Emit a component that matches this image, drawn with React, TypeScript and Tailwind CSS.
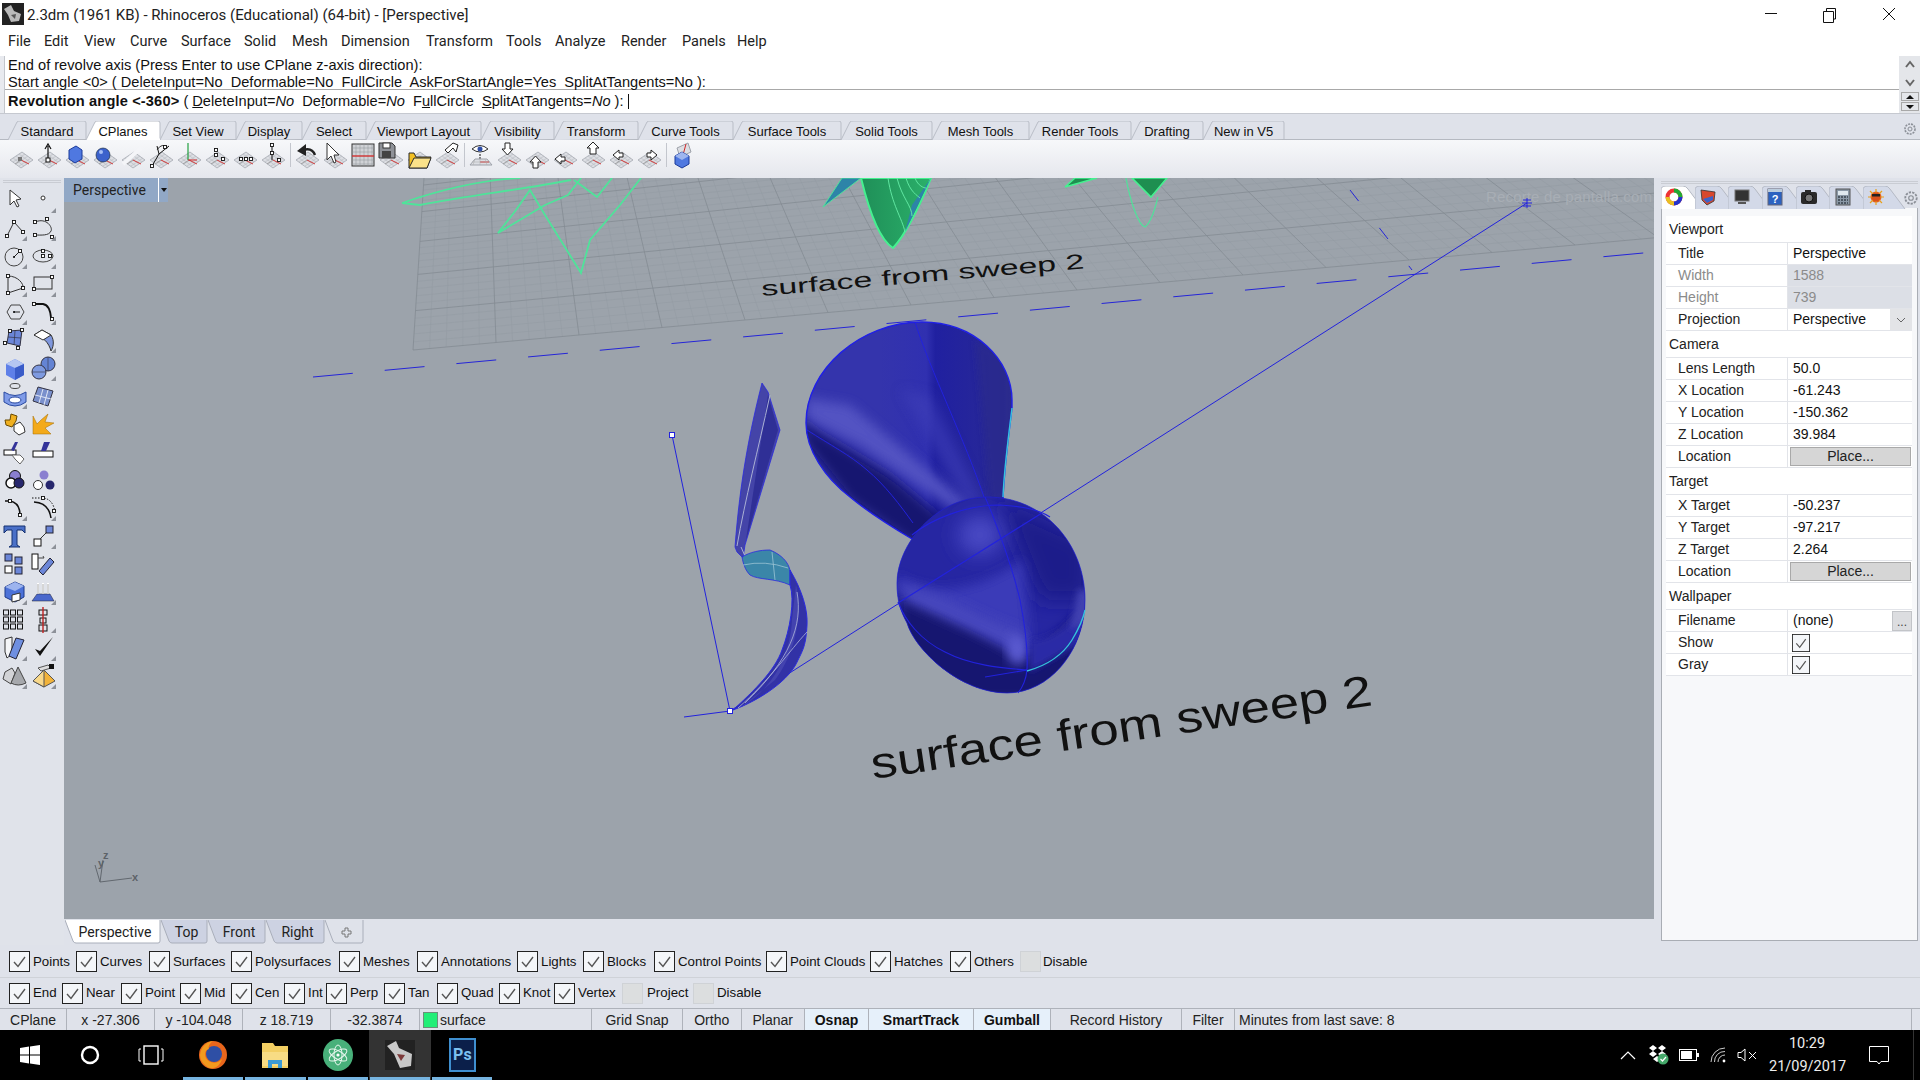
import type { ReactNode } from "react";

const menus = [
  ["File", 36], ["Edit", 40], ["View", 46], ["Curve", 51], ["Surface", 63], ["Solid", 48], ["Mesh", 49],
  ["Dimension", 85], ["Transform", 80], ["Tools", 49], ["Analyze", 66], ["Render", 61], ["Panels", 55], ["Help", 40],
] as const;

const topTabs = [
  ["Standard", 78], ["CPlanes", 74], ["Set View", 76], ["Display", 66], ["Select", 64], ["Viewport Layout", 115], ["Visibility", 73],
  ["Transform", 84], ["Curve Tools", 95], ["Surface Tools", 108], ["Solid Tools", 91], ["Mesh Tools", 97], ["Render Tools", 102],
  ["Drafting", 72], ["New in V5", 81],
] as const;

const filters = [
  ["Points", 67], ["Curves", 73], ["Surfaces", 82], ["Polysurfaces", 108], ["Meshes", 78], ["Annotations", 100], ["Lights", 66],
  ["Blocks", 71], ["Control Points", 112], ["Point Clouds", 104], ["Hatches", 80], ["Others", 70],
] as const;

const snaps = [
  ["End", 53], ["Near", 59], ["Point", 59], ["Mid", 51], ["Cen", 53], ["Int", 42], ["Perp", 58], ["Tan", 53], ["Quad", 62],
  ["Knot", 55], ["Vertex", 68],
] as const;

function Check({ size = 21 }: { size?: number }) {
  return (
    <svg width={size} height={size} viewBox="0 0 21 21" className="shrink-0">
      <rect x="0.5" y="0.5" width="20" height="20" fill="#f4f6f9" stroke="#222" />
      <path d="M5 11 L9 15.5 L16 6" fill="none" stroke="#555" strokeWidth="1.4" />
    </svg>
  );
}

function CheckItem({ label, width }: { label: string; width: number }) {
  return (
    <div className="flex items-center gap-[3px] shrink-0" style={{ width }}>
      <Check />
      <span className="text-[13.3px] text-[#111] whitespace-nowrap">{label}</span>
    </div>
  );
}

function OffItem({ label, width, gap }: { label: string; width: number; gap: string }) {
  return (
    <div className={`flex items-center shrink-0 ${gap}`} style={{ width }}>
      <div className="w-[21px] h-[21px] bg-[#dcdedf] border border-[#cfd2d6] shrink-0" />
      <span className="text-[13.3px] text-[#111] whitespace-nowrap">{label}</span>
    </div>
  );
}

function TopTab({ label, width, active }: { label: string; width: number; active?: boolean }) {
  return (
    <div className="relative flex items-center justify-center shrink-0 h-[18px] pt-[3px] text-[13px] text-[#111]" style={{ width }}>
      <svg width={width + 8} height="19" className="absolute left-0 top-0">
        <path
          d={`M0 19 L9 1 Q10 0 12 0 L${width - 2} 0 Q${width} 0 ${width} 2 L${width} 18`}
          fill={active ? "#ffffff" : "#dfe2ea"}
          stroke="#b9bdc6"
        />
        {active && <rect x="2" y="17.5" width={width - 2} height="2" fill="#fff" />}
      </svg>
      <span className="relative">{label}</span>
    </div>
  );
}

function ViewTab({ label, width, active, children }: { label?: string; width: number; active?: boolean; children?: ReactNode }) {
  return (
    <div className="relative flex items-center justify-center shrink-0 h-[24px] text-[14px] text-[#222] font-['Roboto',sans-serif]" style={{ width }}>
      <svg width={width} height="24" className="absolute left-0 top-0">
        <path
          d={`M0 0 L8 21 Q9 23 11 23 L${width - 3} 23 Q${width - 1} 23 ${width - 1} 21 L${width - 1} 0`}
          fill={active ? "#ffffff" : children ? "#dfe2ea" : "#cdd2e2"}
          stroke="#a9aeba"
        />
      </svg>
      <span className="relative pl-[4px]">{label}{children}</span>
    </div>
  );
}

function SideTab({ children, active }: { children: ReactNode; active?: boolean }) {
  return (
    <div className="relative w-[33.7px] h-[22px] pr-[7px] shrink-0 flex items-center justify-center">
      <svg width="44" height="23" className="absolute left-0 top-0">
        <path d="M0 23 L0 4 Q0 0 5 0 L22 0 Q25 0 27 3 L42 23" fill={active ? "#ffffff" : "#d3d9e8"} stroke="#b4b9c4" />
      </svg>
      <span className="relative flex">{children}</span>
    </div>
  );
}

function Section({ title }: { title: string }) {
  return <div className="h-[27px] flex items-center pl-[3px] border-b border-[#e2e4e9] text-[14px] text-[#222]">{title}</div>;
}

function Row({ label, value, muted, children }: { label: string; value?: string; muted?: boolean; children?: ReactNode }) {
  return (
    <div className="h-[22px] flex border-b border-[#e2e4e9] text-[14px]">
      <div className={`w-[122px] pl-[12px] flex items-center border-r border-[#e2e4e9] ${muted ? "text-[#8b8b8b]" : "text-[#222]"}`}>{label}</div>
      <div className={`flex-1 flex items-center ${muted ? "bg-[#dcdfe6] text-[#8b8b8b]" : "text-[#111]"}`}>
        {value && <span className="pl-[5px]">{value}</span>}
        {children}
      </div>
    </div>
  );
}

function PlaceButton() {
  return <div className="ml-[2px] w-[121px] h-[19px] bg-[#d6d6d6] border border-[#a9a9a9] flex items-center justify-center text-[#222]">Place...</div>;
}

/* ---- left tool palette ---- */
const sq = (x: number, y: number) => <rect x={x - 1.5} y={y - 1.5} width="3" height="3" fill="#fff" stroke="#111" strokeWidth="0.9" />;
const blue = "#6b86d8";

function Tool({ children, fly = true }: { children: ReactNode; fly?: boolean }) {
  return (
    <svg width="28" height="28" viewBox="0 0 28 28">
      {children}
      {fly && <path d="M27 22 L27 27 L22 27 Z" fill="#8d9199" />}
    </svg>
  );
}

const sideTools: [ReactNode, boolean][] = [
  [<path d="M10 4 L10 19 L14 15 L17 21 L19 20 L16 14 L21 13 Z" fill="#fff" stroke="#333" />, false],
  [<circle cx="14" cy="12" r="2" fill="#fff" stroke="#333" />, true],
  [<g><path d="M7 22 L14 8 L23 18" fill="none" stroke="#333" />{sq(7, 22)}{sq(14, 8)}{sq(23, 18)}</g>, true],
  [<g><path d="M6 8 C18 3 24 14 22 17 C20 22 12 21 6 21" fill="none" stroke="#333" />{sq(6, 8)}{sq(18, 5)}{sq(6, 21)}{sq(23, 23)}</g>, true],
  [<g><circle cx="14" cy="15" r="9" fill="none" stroke="#444" /><path d="M14 15 L20 9" stroke="#222" />{sq(20, 9)}<circle cx="14" cy="15" r="1" /></g>, true],
  [<g><ellipse cx="14" cy="14" rx="10" ry="6" fill="none" stroke="#444" />{sq(14, 9)}{sq(14, 14)}{sq(21, 14)}</g>, true],
  [<g><path d="M8 6 C18 6 24 14 23 18 L8 23 Z" fill="none" stroke="#333" />{sq(8, 6)}{sq(23, 18)}{sq(8, 23)}</g>, true],
  [<g><rect x="5" y="7" width="18" height="12" fill="none" stroke="#333" />{sq(23, 7)}{sq(5, 19)}</g>, true],
  [<g><path d="M7 14 L11 7 L20 7 L24 14 L20 21 L11 21 Z" fill="none" stroke="#444" /><path d="M14 14 L20 14" stroke="#222" /><circle cx="14" cy="14" r="1" /></g>, true],
  [<g><path d="M5 6 L14 6 Q21 7 22 20" fill="none" stroke="#111" strokeWidth="1.8" />{sq(5, 6)}{sq(23, 21)}</g>, true],
  [<g><path d="M9 5 L22 4 L20 20 L7 17 Z" fill={blue} stroke="#334" />{sq(10, 5)}{sq(22, 4)}{sq(5, 17)}{sq(18, 22)}<path d="M15 5 L14 19 M8 11 L21 12" stroke="#334" strokeWidth=".7" /></g>, false],
  [<g><path d="M5 9 L13 4 L22 9 C26 15 24 22 22 25 C20 17 14 10 5 9 Z" fill="#7f97dd" stroke="#333" /><path d="M5 9 L13 4 L22 9 L14 14 Z" fill="#fff" stroke="#333" /></g>, true],
  [<g><path d="M6 10 L15 5 L24 10 L24 21 L15 26 L6 21 Z" fill="#5f80e8" /><path d="M6 10 L15 14 L24 10 L15 5 Z" fill="#b5c6f2" /><path d="M15 14 L15 26 L24 21 L24 10 Z" fill="#3a5cc8" /></g>, false],
  [<g><circle cx="19" cy="10" r="7" fill="#6484d4" stroke="#334" /><circle cx="10" cy="18" r="7" fill="#7e9ae0" stroke="#334" /><path d="M3 18 H17 M19 3 V17" stroke="#334" strokeWidth=".6" /></g>, true],
  [<g><ellipse cx="15" cy="4" rx="5" ry="2.5" fill="none" stroke="#444" /><path d="M4 10 Q15 17 26 10 L26 20 Q15 28 4 20 Z" fill="#7f9be8" stroke="#2a4aa0" /><ellipse cx="15" cy="18" rx="6" ry="3" fill="#fff" stroke="#2a4aa0" /></g>, true],
  [<g><path d="M9 5 L24 9 L19 24 L4 19 Z" fill="#7a90cc" stroke="#334" /><path d="M14 7 L10 21 M19 8 L15 23 M6 13 L22 17" stroke="#dfe5f5" /></g>, false],
  [<g><path d="M5 10 L10 10 L11 4 L17 6 L16 11 L12 17 L6 15 Z" fill="#f0b020" stroke="#6a4a00" /><path d="M14 15 L20 12 L24 17 L25 22 L19 25 L14 21 Z" fill="#fff" stroke="#333" /></g>, false],
  [<path d="M4 6 L8 14 L12 10 L19 4 L16 12 L25 13 L16 18 L22 24 L4 24 Z" fill="#f3aa1a" stroke="#a06a00" strokeWidth=".5" />, false],
  [<g><rect x="4" y="12" width="12" height="5" fill="#fff" stroke="#111" /><path d="M15 4 L18 4 L14 13 L11 12 Z" fill="#333399" /><path d="M12 17 L20 17 L24 21 L20 26 L15 21 Z" fill="#fff" stroke="#666" /></g>, false],
  [<g><rect x="4" y="13" width="20" height="6" fill="#fff" stroke="#111" /><path d="M15 4 L21 4 L17 13 L12 13 Z" fill="#333399" /></g>, false],
  [<g><circle cx="15" cy="10" r="5.5" fill="#8a7fd0" stroke="#111" /><circle cx="11" cy="17" r="5" fill="#fff" stroke="#111" strokeWidth="1.5" /><circle cx="19" cy="17" r="5" fill="#27276d" stroke="#111" /></g>, false],
  [<g><circle cx="15" cy="9" r="4.5" fill="#8a7fd0" /><circle cx="9" cy="19" r="4.5" fill="#fff" stroke="#333" /><circle cx="21" cy="19" r="4.5" fill="#27276d" /></g>, false],
  [<g><path d="M5 7 L10 7 Q20 9 20 21" fill="none" stroke="#111" strokeWidth="1.6" />{sq(10, 7)}{sq(20, 21)}</g>, true],
  [<g><path d="M5 8 Q20 9 22 24" fill="none" stroke="#111" strokeWidth="1.6" /><path d="M3 4 H14 Q24 5 26 18" fill="none" stroke="#111" strokeDasharray="1.5 1.5" />{sq(14, 4)}{sq(25, 17)}</g>, true],
  [<path d="M4 4 H25 V11 L22 8 H17 V23 L20 25 H9 L12 23 V8 H7 L4 11 Z" fill="#4a70c8" stroke="#143070" />, false],
  [<g><rect x="5" y="17" width="7" height="7" fill="#fff" stroke="#111" /><rect x="17" y="4" width="7" height="7" fill={blue} stroke="#223" /><path d="M11 17 L18 10" stroke="#333" /></g>, true],
  [<g><rect x="5" y="4" width="7" height="7" fill={blue} stroke="#223" /><rect x="15" y="7" width="7" height="7" fill={blue} stroke="#223" /><rect x="5" y="16" width="7" height="7" fill="#fff" stroke="#111" /><rect x="15" y="17" width="7" height="7" fill={blue} stroke="#223" /></g>, false],
  [<g><rect x="3" y="4" width="6" height="15" fill="#fff" stroke="#111" /><path d="M9 8 H15 L14 6" fill="none" stroke="#444" /><path d="M21 8 L25 12 L14 25 L10 21 Z" fill={blue} stroke="#223" /></g>, false],
  [<g><path d="M5 9 L15 4 L24 8 L24 19 L15 24 L5 19 Z" fill="#4c72d8" stroke="#1d3a8a" /><path d="M5 9 L15 13 L24 8 L15 4 Z" fill="#9db4ee" /><path d="M12 17 L20 15 L20 22 L12 24 Z" fill="#fff" stroke="#333" /></g>, true],
  [<g><path d="M9 5 V16 M14 5 V16 M19 5 V16" stroke="#fff" strokeWidth="2" /><path d="M9 6 V15 M14 6 V15 M19 6 V15" stroke="#555" strokeWidth=".5" /><path d="M8 16 L21 16 L25 23 L3 23 Z" fill="#4a68cc" stroke="#223" strokeWidth=".5" /></g>, true],
  [<g fill="none" stroke="#111">{[6, 13, 20].flatMap((y) => [6, 13, 20].map((x) => <rect key={`${x}${y}`} x={x - 2.5} y={y - 2} width="5" height="5" />))}</g>, false],
  [<g><rect x="10" y="4" width="8" height="5" fill="none" stroke="#111" /><rect x="11" y="12" width="6" height="5" fill="none" stroke="#111" /><rect x="10" y="19" width="8" height="6" fill="none" stroke="#111" /><path d="M14 1 V27" stroke="#c02020" strokeWidth="1.4" /></g>, true],
  [<g><path d="M5 5 L12 3 L12 20 L7 24 L5 18 Z" fill="#f4f5f7" stroke="#333" /><path d="M16 4 L24 6 L16 25 L9 22 Z" fill="#6f8fe0" stroke="#223" /></g>, true],
  [<path d="M6 15 L11 22 L24 3 L11 17 Z" fill="#111" />, true],
  [<g><path d="M5 10 L12 6 L15 11 L11 22 L3 17 Z" fill="#d2d3d6" stroke="#444" /><path d="M18 5 L26 21 Q18 25 11 21 Z" fill="#a6a8ac" stroke="#444" /></g>, true],
  [<g><path d="M15 8 L26 19 L15 25 L4 19 Z" fill="#f2b33a" stroke="#555" /><path d="M15 8 L15 25 L4 19 Z" fill="#f8d88a" stroke="#555" /><path d="M9 6 L19 3 L22 6 L12 9 Z" fill="#ddd" stroke="#555" /><rect x="20" y="2" width="5" height="5" fill="#111" /></g>, true],
];

/* ---- top toolbar ---- */
function CPlaneIcon({ children, plain }: { children?: ReactNode; plain?: boolean }) {
  return (
    <svg width="28" height="30" viewBox="0 0 28 30" className="shrink-0">
      {!plain && (
        <g>
          <path d="M3 20 L15 12 L26 20 L14 28 Z" fill="#dcdee3" stroke="#9ea2aa" strokeWidth=".7" />
          <path d="M6 18 L17 26 M9 16 L20 24 M12 14 L23 22 M6 22 L18 14 M9 24 L21 16 M12 26 L24 18" stroke="#aeb2b9" strokeWidth=".5" />
          <path d="M14 20 L22 24" stroke="#d02828" strokeWidth=".9" />
          <path d="M14 20 L8 24" stroke="#888" strokeWidth=".7" />
        </g>
      )}
      {children}
    </svg>
  );
}

const tb: ReactNode[][] = [
  [
    <CPlaneIcon key="1"><rect x="11" y="17" width="4" height="4" fill="#777" /></CPlaneIcon>,
    <CPlaneIcon key="2"><path d="M13 20 V6 M10 9 L13 4 L16 9" fill="none" stroke="#111" strokeWidth="1.2" /><rect x="11" y="18" width="4" height="4" fill="#fff" stroke="#111" /></CPlaneIcon>,
    <CPlaneIcon key="3"><path d="M6 10 L13 6 L19 10 L19 19 L12 23 L6 19 Z" fill="#4f78e0" stroke="#1b3a9a" /></CPlaneIcon>,
    <CPlaneIcon key="4"><circle cx="12" cy="15" r="7" fill="#3c62cc" stroke="#123" strokeWidth=".6" /><circle cx="10" cy="12" r="2" fill="#a5bdf5" /></CPlaneIcon>,
    <CPlaneIcon key="5"><path d="M4 24 L22 8" stroke="#f4f5f8" strokeWidth="4" /></CPlaneIcon>,
    <CPlaneIcon key="6"><path d="M5 26 L12 14 L10 6 M12 14 L22 6" fill="none" stroke="#111" /><path d="M10 10 Q15 2 21 8" fill="none" stroke="#333" />{sq(18, 7)}{sq(5, 26)}</CPlaneIcon>,
    <CPlaneIcon key="7"><path d="M13 3 V20" stroke="#22a040" strokeWidth="1.2" /><path d="M13 20 H22" stroke="#d02828" /></CPlaneIcon>,
    <CPlaneIcon key="8">{sq(13, 10)}{sq(13, 15)}{sq(20, 19)}</CPlaneIcon>,
    <CPlaneIcon key="9">{sq(10, 19)}{sq(15, 19)}{sq(20, 19)}</CPlaneIcon>,
    <CPlaneIcon key="10"><path d="M13 6 V20" stroke="#111" />{sq(13, 5)}{sq(13, 13)}{sq(20, 20)}</CPlaneIcon>,
  ],
  [
    <CPlaneIcon key="11"><path d="M22 15 Q19 7 10 10" fill="none" stroke="#222" strokeWidth="2.4" /><path d="M4 11 L13 4 L13 16 Z" fill="#222" /></CPlaneIcon>,
    <CPlaneIcon key="12"><path d="M6 3 L6 20 L10 16 L13 23 L15 22 L13 15 L18 15 Z" fill="#fff" stroke="#333" /></CPlaneIcon>,
    <svg key="13" width="28" height="30" viewBox="0 0 28 30" className="shrink-0">
      <rect x="3" y="4" width="22" height="22" fill="#d0d2d6" stroke="#333" />
      <path d="M7 4 V26 M11 4 V26 M15 4 V26 M19 4 V26 M23 4 V26 M3 8 H25 M3 12 H25 M3 20 H25 M3 24 H25" stroke="#8d9095" strokeWidth=".5" />
      <path d="M3 16 H25" stroke="#d03030" strokeWidth="1.4" />
    </svg>,
    <CPlaneIcon key="14"><path d="M2 3 H15 L18 6 V18 H2 Z" fill="#8f9298" stroke="#333" /><rect x="6" y="3" width="7" height="5" fill="#fff" stroke="#333" /><rect x="5" y="11" width="9" height="7" fill="#444" /></CPlaneIcon>,
    <CPlaneIcon key="15"><path d="M4 13 L4 28 L22 28 L26 17 L11 17 L9 13 Z" fill="#f3c023" stroke="#2b2b2b" /><path d="M4 28 L9 18 L26 18 L22 28 Z" fill="#fbe28a" stroke="#2b2b2b" /></CPlaneIcon>,
    <CPlaneIcon key="16"><path d="M12 10 L20 3 L25 5 L23 12 L20 8 L15 13 Z" fill="#fff" stroke="#222" /></CPlaneIcon>,
  ],
  [
    <svg key="17" width="28" height="30" viewBox="0 0 28 30" className="shrink-0">
      <path d="M5 9 Q13 2 21 9 Q13 15 5 9 Z" fill="#fff" stroke="#333" /><circle cx="13" cy="9" r="2.5" fill="#2f4fa8" />
      <path d="M13 14 V22" stroke="#111" strokeDasharray="2 1" />
      <path d="M3 25 L8 19 L20 19 L25 25 Z" fill="#dcdee3" stroke="#9ea2aa" /><path d="M13 22 H22" stroke="#d02828" /><path d="M8 19 L6 25 M13 19 V25 M18 19 L20 25 M5 22 H23" stroke="#aaa" strokeWidth=".5" />
    </svg>,
    <CPlaneIcon key="18"><path d="M10 3 H15 V9 H18 L12.5 15 L7 9 H10 Z" fill="#fff" stroke="#222" /></CPlaneIcon>,
    <CPlaneIcon key="19"><path d="M10 28 H15 V22 H18 L12.5 16 L7 22 H10 Z" fill="#fff" stroke="#222" /></CPlaneIcon>,
    <CPlaneIcon key="20"><path d="M4 19 L10 14 V17 H14 V21 H10 V24 Z" fill="#fff" stroke="#222" /></CPlaneIcon>,
    <CPlaneIcon key="21"><path d="M14 2 L20 8 H17 V14 H11 V8 H8 Z" fill="#fff" stroke="#222" /></CPlaneIcon>,
    <CPlaneIcon key="22"><path d="M6 15 L12 10 V13 H16 V17 H12 V20 Z" fill="#fff" stroke="#222" /></CPlaneIcon>,
    <CPlaneIcon key="23"><path d="M22 15 L16 10 V13 H12 V17 H16 V20 Z" fill="#fff" stroke="#222" /></CPlaneIcon>,
  ],
  [
    <svg key="24" width="28" height="30" viewBox="0 0 28 30" className="shrink-0">
      <path d="M8 8 L19 3 L22 12 L11 17 Z" fill="#dcdee3" stroke="#9ea2aa" /><path d="M17 4 L14 15" stroke="#d02828" />
      <path d="M6 16 L13 12 L20 16 L20 24 L13 28 L6 24 Z" fill="#4f78e0" stroke="#1b3a9a" /><path d="M6 16 L13 20 L20 16 L13 12 Z" fill="#9eb6ef" />
    </svg>,
  ],
];

/* ---- viewport scene ---- */
function gridPoint(u: number, v: number): [number, number] {
  const dy = 41 * v - 1.6 * v * v;
  return [413 + 83 * u + ((11 - 17 * u) * dy) / 172, 350 - 7.5 * u - dy];
}

function Grid() {
  const minor: ReactNode[] = [];
  const major: ReactNode[] = [];
  for (let i = 0; i <= 80; i++) {
    const [x1, y1] = gridPoint(i / 5, 0);
    const [x2, y2] = gridPoint(i / 5, 7);
    const line = <line key={`u${i}`} x1={x1} y1={y1} x2={x2} y2={y2} />;
    (i % 5 === 0 ? major : minor).push(line);
  }
  for (let i = 0; i <= 35; i++) {
    const [x1, y1] = gridPoint(0, i / 5);
    const [x2, y2] = gridPoint(16, i / 5);
    const line = <line key={`v${i}`} x1={x1} y1={y1} x2={x2} y2={y2} />;
    (i % 5 === 0 ? major : minor).push(line);
  }
  return (
    <g>
      <g stroke="#939aa2" strokeWidth="0.5">{minor}</g>
      <g stroke="#848b93" strokeWidth="0.8">{major}</g>
    </g>
  );
}

function Scene() {
  const conePath = "M806 423 C806 370 860 322 922 322 C975 322 1012 360 1012 400 L1012 408 C1008 440 1004 470 1003 500 L985 540 L912 539 C880 520 862 507 850 497 C825 478 806 450 806 423 Z";
  const bulbPath = "M897 583 C897 545 935 497 987 497 C1045 497 1085 545 1085 600 C1085 650 1050 693 1007 693 C960 693 915 650 907 623 C900 610 897 600 897 583 Z";
  return (
    <svg viewBox="64 178 1590 741" width="1590" height="741" className="block">
      <defs>
        <filter id="b3" x="-30%" y="-30%" width="160%" height="160%"><feGaussianBlur stdDeviation="3" /></filter>
        <filter id="b6" x="-30%" y="-30%" width="160%" height="160%"><feGaussianBlur stdDeviation="6" /></filter>
        <filter id="b10" x="-40%" y="-40%" width="180%" height="180%"><feGaussianBlur stdDeviation="10" /></filter>
        <clipPath id="cone"><path d={conePath} /></clipPath>
        <clipPath id="bulb"><path d={bulbPath} /></clipPath>
        <linearGradient id="cb" x1="880" y1="400" x2="1012" y2="400" gradientUnits="userSpaceOnUse">
          <stop offset="0" stopColor="#3434ac" />
          <stop offset="0.35" stopColor="#3030b0" />
          <stop offset="0.42" stopColor="#2020a0" />
          <stop offset="0.75" stopColor="#26269a" />
          <stop offset="1" stopColor="#2c2c8e" />
        </linearGradient>
        <linearGradient id="leaf" x1="0" y1="0" x2="1" y2="0">
          <stop offset="0" stopColor="#1f8f58" />
          <stop offset="1" stopColor="#2bb06a" />
        </linearGradient>
      </defs>
      <Grid />

      {/* green reference curves */}
      <g fill="none" stroke="#4fe39a" strokeWidth="1.8">
        <path d="M402 203 C440 190 480 180 520 178 M402 203 L420 205 C470 195 520 190 571 180" />
        <path d="M498 233 L545 205 L568 195 L581 178" />
        <path d="M498 233 L516 210 L530 190 L545 215 L581 273 L590 240 L620 205 L641 178" />
        <path d="M574 180 L597 197 L612 178" />
        <path d="M1126 178 C1130 200 1138 225 1145 227 C1152 222 1156 205 1158 197" strokeWidth="1.2" />
      </g>
      <path d="M842 178 L823 207 L861 178 Z" fill="#2d84a8" stroke="#4fe39a" />
      <path d="M861 178 C870 215 880 240 893 248 C905 235 920 205 931 178 Z" fill="url(#leaf)" stroke="#46f090" strokeWidth="2" />
      <path d="M905 232 L931 178 L912 205 Z" fill="#2d84a8" />
      <g fill="none" stroke="#67eda8" strokeWidth=".9">
        <path d="M888 178 C892 205 902 218 905 232 M897 178 C902 198 912 206 912 216 M906 178 C910 192 918 196 920 198 M915 178 C918 186 924 188 926 188" />
      </g>
      <path d="M1065 187 L1097 178 L1075 178 Z" fill="#1e8f50" stroke="#46f090" strokeWidth="1.6" />
      <path d="M1132 178 L1151 197 L1167 178 Z" fill="#1e8f50" stroke="#46f090" strokeWidth="1.6" />

      <text x="0" y="0" transform="translate(762 296) rotate(-4.9)" fontFamily="Liberation Sans, sans-serif" fontSize="21" fill="#111" textLength="324" lengthAdjust="spacingAndGlyphs">surface from sweep 2</text>
      <text x="1486" y="202" fontFamily="Liberation Sans, sans-serif" fontSize="15" fill="#a8aeb5" textLength="166">Recorte de pantalla.com</text>

      {/* construction lines */}
      <line x1="313" y1="377" x2="1654" y2="252" stroke="#2525d8" strokeWidth="1" strokeDasharray="40 32" />
      <line x1="1350" y1="190" x2="1412" y2="270" stroke="#2525d8" strokeWidth="1" strokeDasharray="14 34" />
      <path d="M730 711 L1527 203" stroke="#2222dd" strokeWidth="1" fill="none" />
      <path d="M1522 203 H1532 M1527 198 V208 M1523 200 H1531 M1523 206 H1531" stroke="#2222dd" strokeWidth="1" fill="none" />
      <path d="M684 717 L730 711 L672 435" stroke="#2222dd" strokeWidth="1" fill="none" />

      {/* sweep section */}
      <path d="M762 383 L768 392 L780 430 L745 545 L743 558 L737 552 L735 547 C740 480 750 430 762 383 Z" fill="#4444a8" stroke="#2a2ae0" strokeWidth=".8" />
      <path d="M768 395 L778 430 L746 540 Z" fill="#2f2f96" />
      <path d="M770 395 C758 450 745 500 737 546 M741 547 L745 556" fill="none" stroke="#aab0d4" strokeWidth="1" />
      <path d="M742 557 C750 552 760 550 770 550 C782 555 788 562 790 570 L790 585 C775 578 758 580 750 575 C745 570 743 563 742 557 Z" fill="#3b86a8" stroke="#2a2ae0" strokeWidth=".8" />
      <path d="M743 565 Q765 560 788 568 M772 552 L775 580" fill="none" stroke="#9cc4d4" strokeWidth=".8" />
      <path d="M790 570 C802 590 808 610 807 625 C806 645 803 650 798 660 C790 680 760 700 733 710 C755 690 775 670 782 650 C790 630 795 600 790 585 Z" fill="#3232a6" stroke="#2a2ae0" strokeWidth="1" />
      <path d="M796 585 C802 610 798 650 775 680 L740 708 C770 690 790 660 792 620 Z" fill="#4a4ab4" opacity=".7" />
      <path d="M797 592 C803 625 790 660 745 703 M807 632 C790 650 770 680 738 708" fill="none" stroke="#b0b6da" strokeWidth=".8" />
      <rect x="669.5" y="432.5" width="5" height="5" fill="#fff" stroke="#2222dd" />
      <rect x="727.5" y="708.5" width="5" height="5" fill="#fff" stroke="#2222dd" />

      {/* revolved body */}
      <path d={conePath} fill="url(#cb)" />
      <g clipPath="url(#cone)">
        <path d="M800 415 L806 445 L850 500 L915 545 L950 525 L890 475 L815 430 Z" fill="#14146f" filter="url(#b6)" />
        <path d="M806 398 L850 405 L970 505 L955 510 L860 445 L806 418 Z" fill="#5252c2" filter="url(#b6)" />
        <path d="M900 390 L930 395 L985 505 L968 505 Z" fill="#4040b8" opacity=".6" filter="url(#b6)" />
        <path d="M1012 360 L1012 500 L990 500 L975 340 Z" fill="#2b2b8c" opacity=".7" filter="url(#b3)" />
      </g>
      <path d={conePath} fill="none" stroke="#2020e8" strokeWidth="1.4" />
      <path d="M915 322 C930 370 965 440 985 500" fill="none" stroke="#2222dd" strokeWidth="1" />
      <path d="M807 430 C830 445 850 455 867 470 C885 485 900 505 913 523" fill="none" stroke="#2222dd" strokeWidth="1" />
      <path d="M1012 408 C1008 440 1004 470 1003 497" fill="none" stroke="#35c4dc" strokeWidth="1.4" />

      <path d={bulbPath} fill="#2626a2" />
      <g clipPath="url(#bulb)">
        <path d="M1000 500 L1090 540 L1090 600 L1040 600 Z" fill="#1b1b8a" filter="url(#b10)" />
        <ellipse cx="980" cy="535" rx="22" ry="20" fill="#4a4ac4" filter="url(#b10)" />
        <path d="M900 595 C950 610 1000 645 1030 655 C1050 640 1075 620 1090 600 L1090 700 L900 700 Z" fill="#12126f" filter="url(#b6)" />
        <path d="M897 575 C930 600 980 590 1022 560 L1030 640 C990 630 950 600 897 590 Z" fill="#3a3ab8" filter="url(#b6)" />
        <path d="M900 585 C940 590 985 620 1015 628 C1028 636 1028 650 1022 660 C1000 640 950 622 905 600 Z" fill="#4a4abf" filter="url(#b6)" />
        <ellipse cx="1017" cy="650" rx="9" ry="15" fill="#5c5cd2" filter="url(#b6)" />
        <path d="M1030 640 C1050 640 1070 625 1086 600 L1086 640 L1030 672 Z" fill="#2a2aa6" filter="url(#b3)" />
        <path d="M1078 590 L1090 590 L1090 620 L1070 630 Z" fill="#4040b0" filter="url(#b3)" />
      </g>
      <path d={bulbPath} fill="none" stroke="#2020d0" strokeWidth="1" opacity=".7" />
      <g fill="none" stroke="#2222dd" strokeWidth="1.1">
        <path d="M912 535 C930 520 965 505 1000 505 C1020 506 1040 510 1050 517" />
        <path d="M985 497 C993 515 1012 565 1020 600 C1026 630 1028 650 1027 670 C1026 680 1022 688 1018 693" />
        <path d="M898 602 C905 620 920 640 945 652 C970 665 1000 668 1027 670" />
        <path d="M985 677 L1027 670" />
        <path d="M898 603 L1042 513" strokeWidth="1.2" />
      </g>
      <path d="M1027 671 C1045 666 1062 656 1072 640 C1078 630 1083 620 1085 610" fill="none" stroke="#35c4dc" strokeWidth="1.3" />

      <text x="0" y="0" transform="translate(873 779) rotate(-8.4)" fontFamily="Liberation Sans, sans-serif" fontSize="44" fill="#111" textLength="506" lengthAdjust="spacingAndGlyphs">surface from sweep 2</text>

      {/* world axes */}
      <g stroke="#62686f" fill="none" strokeWidth="1">
        <path d="M100 882 L132 878 M100 882 L95 865 M100 882 L103 860" />
      </g>
      <g fontFamily="Liberation Sans, sans-serif" fontSize="11" fontWeight="700" fill="#5c6268">
        <text x="132" y="881">x</text>
        <text x="98" y="867">y</text>
        <text x="103" y="859">z</text>
      </g>
    </svg>
  );
}

/* ---- taskbar ---- */
function Running({ children, active }: { children: ReactNode; active?: boolean }) {
  return (
    <div className={`relative w-[62.3px] h-[50px] flex items-center justify-center shrink-0 ${active ? "bg-[#333]" : ""}`}>
      {children}
      <div className="absolute bottom-0 left-[1px] right-[1px] h-[3px] bg-[#76b4e0]" />
    </div>
  );
}

export default function App() {
  return (
    <div className="w-[1920px] h-[1080px] overflow-hidden flex flex-col bg-[#dfe2ea] font-['Liberation_Sans',Arial,sans-serif]">
      {/* title bar */}
      <div className="h-[28px] bg-white flex items-center shrink-0 font-['Roboto',sans-serif]">
        <svg width="22" height="22" viewBox="0 0 22 22" className="ml-[2px]">
          <rect width="22" height="22" fill="#222" />
          <path d="M2 6 L9 2 L12 8 L19 11 L17 18 L9 19 L6 12 Z" fill="#b9b9b9" />
          <path d="M9 12 L14 11 L13 16 Z" fill="#555" />
        </svg>
        <span className="ml-[3px] mt-[2px] text-[15px] text-[#222]">2.3dm (1961 KB) - Rhinoceros (Educational) (64-bit) - [Perspective]</span>
        <div className="ml-auto flex items-center text-[#111]">
          <svg width="56" height="28" viewBox="0 0 56 28"><path d="M0 13.5 H12" stroke="#111" strokeWidth="1" /></svg>
          <svg width="60" height="28" viewBox="0 0 60 28"><path d="M2.5 11.5 V22.5 H12.5 V11.5 Z M5.5 11 V8.5 H14.5 V19 H13" fill="none" stroke="#111" /></svg>
          <svg width="39" height="28" viewBox="0 0 39 28"><path d="M2 8 L14 20 M14 8 L2 20" stroke="#111" /></svg>
        </div>
      </div>
      {/* menu */}
      <div className="h-[28px] pb-[1px] bg-white flex items-center pl-[8px] shrink-0 text-[14.5px] text-[#222] font-['Roboto',sans-serif]">
        {menus.map(([label, width]) => (
          <span key={label} className="shrink-0" style={{ width }}>{label}</span>
        ))}
      </div>
      {/* command area */}
      <div className="h-[57px] flex shrink-0 pl-[4px] bg-[#e8eaef] text-[14.6px] leading-[17px] text-[#111]">
        <div className="flex-1 bg-white border-l border-[#c3c6cc]">
          <div className="h-[34px] pl-[3px] pt-[1px] border-b border-[#a8a8a8] whitespace-pre">
            <div>End of revolve axis (Press Enter to use CPlane z-axis direction):</div>
            <div>Start angle &lt;0&gt; ( DeleteInput=No  Deformable=No  FullCircle  AskForStartAngle=Yes  SplitAtTangents=No ):</div>
          </div>
          <div className="h-[22px] pl-[3px] flex items-center whitespace-pre">
            <b className="tracking-[0.15px]">Revolution angle &lt;-360&gt;</b>
            <span> ( <u>D</u>eleteInput=<i>No</i>  De<u>f</u>ormable=<i>No</i>  F<u>u</u>llCircle  <u>S</u>plitAtTangents=<i>No</i> ): </span>
            <span className="w-px h-[15px] bg-[#111]" />
          </div>
        </div>
        <div className="w-[21px] flex flex-col items-center bg-[#e4e6ea]">
          <svg width="12" height="34" viewBox="0 0 12 34">
            <path d="M2 11 L6 6 L10 11 M2 24 L6 29 L10 24" fill="none" stroke="#666" strokeWidth="2" />
          </svg>
          <div className="w-[18px] h-[9px] mt-[2px] border border-[#a8a8a8] flex items-center justify-center"><div className="w-0 h-0 border-x-[4px] border-x-transparent border-b-[4px] border-b-[#111]" /></div>
          <div className="w-[18px] h-[9px] mt-[1px] border border-[#a8a8a8] flex items-center justify-center"><div className="w-0 h-0 border-x-[4px] border-x-transparent border-t-[4px] border-t-[#111]" /></div>
        </div>
      </div>
      {/* toolbar tabs */}
      <div className="h-[27px] shrink-0 flex items-end pl-[8px] border-b border-[#b5b9c1] bg-[#dfe2ea] border-t border-t-[#c6c9d0] relative">
        {topTabs.map(([label, width]) => (
          <TopTab key={label} label={label} width={width} active={label === "CPlanes"} />
        ))}
        <svg width="14" height="14" viewBox="0 0 14 14" className="absolute right-[3px] top-[8px]">
          <circle cx="7" cy="7" r="5" fill="none" stroke="#8b8f97" strokeDasharray="2 1" strokeWidth="1.6" />
          <circle cx="7" cy="7" r="2" fill="none" stroke="#8b8f97" />
        </svg>
      </div>
      {/* toolbar */}
      <div className="h-[38px] shrink-0 flex items-start pl-[7px] bg-gradient-to-b from-[#f7f8fa] to-[#e5e7ed]">
        {tb.map((group, i) => (
          <div key={i} className="flex items-center">
            {i > 0 && <div className="w-px h-[24px] bg-[#c3c6cd] mx-[2.5px]" />}
            {group}
          </div>
        ))}
      </div>
      {/* work area */}
      <div className="h-[767px] shrink-0 flex">
        <div className="w-[64px] shrink-0 pt-[2px] bg-[#e0e3ea]">
          <div className="h-[3px] mx-[3px] border-y border-[#c9ccd3] mb-[3px]" />
          <div className="grid grid-cols-[29px_29px]">
            {sideTools.map(([icon, fly], i) => (
              <Tool key={i} fly={fly}>{icon}</Tool>
            ))}
          </div>
        </div>
        <div className="w-[1590px] shrink-0 flex flex-col">
          <div className="relative h-[741px] bg-[#9ca3ab] overflow-hidden">
            <Scene />
            <div className="absolute left-0 top-0 w-[104px] h-[24px] bg-[#91a8c6] flex items-center pl-[9px] text-[14px] text-[#222] font-['Roboto',sans-serif]">
              Perspective
              <div className="absolute left-[94px] top-0 w-px h-full bg-white" />
              <div className="absolute left-[97px] top-[10px] w-0 h-0 border-x-[3px] border-x-transparent border-t-[4px] border-t-[#111]" />
            </div>
          </div>
          <div className="flex pl-[1px] pt-[1px]">
            <ViewTab label="Perspective" width={96} active />
            <ViewTab label="Top" width={47} />
            <ViewTab label="Front" width={58} />
            <ViewTab label="Right" width={59} />
            <ViewTab width={39}>
              <svg width="11" height="11" viewBox="0 0 11 11"><path d="M4 1 H7 V4 H10 V7 H7 V10 H4 V7 H1 V4 H4 Z" fill="none" stroke="#777" /></svg>
            </ViewTab>
          </div>
        </div>
        <div className="flex-1 pl-[7px]">
          <div className="h-[3px] mt-[3px] mr-[2px] border-y border-[#c9ccd3] mb-[2px]" />
          <div className="flex h-[22px] relative">
            <SideTab active>
              <svg width="20" height="20" viewBox="0 0 20 20">
                <circle cx="10" cy="10" r="6.5" fill="none" stroke="#e33" strokeWidth="4" />
                <path d="M10 3.5 A6.5 6.5 0 0 1 16.5 10" fill="none" stroke="#2a3" strokeWidth="4" />
                <path d="M16.5 10 A6.5 6.5 0 0 1 10 16.5" fill="none" stroke="#23c" strokeWidth="4" />
                <path d="M10 16.5 A6.5 6.5 0 0 1 3.5 10" fill="none" stroke="#e8c020" strokeWidth="4" />
              </svg>
            </SideTab>
            <SideTab><svg width="18" height="18" viewBox="0 0 18 18"><path d="M2 2 L16 4 L15 13 L8 17 L3 12 Z" fill="#d8482e" stroke="#333" strokeWidth=".8" /><path d="M4 11 L14 8 L14 12 L8 15 Z" fill="#3e62c8" /></svg></SideTab>
            <SideTab><svg width="18" height="18" viewBox="0 0 18 18"><rect x="2" y="2" width="14" height="11" fill="#333" stroke="#777" /><rect x="5" y="14" width="8" height="2" fill="#555" /></svg></SideTab>
            <SideTab><svg width="18" height="18" viewBox="0 0 18 18"><rect x="2" y="1" width="14" height="16" fill="#2c62c0" stroke="#667" /><rect x="2" y="1" width="14" height="3" fill="#bcd" /><text x="9" y="15" textAnchor="middle" fontSize="11" fontWeight="700" fill="#fff">?</text></svg></SideTab>
            <SideTab><svg width="18" height="18" viewBox="0 0 18 18"><rect x="1" y="4" width="16" height="12" rx="2" fill="#2a2a2a" /><rect x="5" y="2" width="6" height="3" fill="#2a2a2a" /><circle cx="9" cy="10" r="4" fill="#777" stroke="#111" /></svg></SideTab>
            <SideTab><svg width="16" height="18" viewBox="0 0 16 18"><rect x="1" y="1" width="14" height="16" fill="#8a98a6" stroke="#555" /><rect x="3" y="3" width="10" height="4" fill="#dfe8ee" /><path d="M3 9 H13 M3 12 H13 M3 15 H13" stroke="#39424c" strokeWidth="1.6" strokeDasharray="2 1" /></svg></SideTab>
            <SideTab><svg width="18" height="18" viewBox="0 0 18 18"><circle cx="9" cy="9" r="5.5" fill="#e8641c" /><path d="M9 1 V17 M1 9 H17 M3 3 L15 15 M15 3 L3 15" stroke="#e8a01c" strokeWidth="1.2" /><circle cx="9" cy="9" r="4.5" fill="#d8501c" /><rect x="5" y="6" width="8" height="2.5" fill="#222" /></svg></SideTab>
            <svg width="16" height="16" viewBox="0 0 14 14" className="absolute left-[242px] top-[4px]">
              <circle cx="7" cy="7" r="5" fill="none" stroke="#8b8f97" strokeDasharray="2 1" strokeWidth="1.6" />
              <circle cx="7" cy="7" r="2" fill="none" stroke="#8b8f97" />
            </svg>
          </div>
          <div className="h-[733px] mr-[2px] pt-[8px] pl-[4px] pr-[5px] bg-[#f7f8fa] border border-t-0 border-[#a9adb4]">
            <div className="bg-white">
              <Section title="Viewport" />
              <Row label="Title" value="Perspective" />
              <Row label="Width" value="1588" muted />
              <Row label="Height" value="739" muted />
              <Row label="Projection" value="Perspective">
                <div className="ml-auto w-[22px] h-[21px] bg-[#e3e4e7] flex items-center justify-center">
                  <svg width="10" height="6" viewBox="0 0 10 6"><path d="M1 1 L5 5 L9 1" fill="none" stroke="#666" /></svg>
                </div>
              </Row>
              <Section title="Camera" />
              <Row label="Lens Length" value="50.0" />
              <Row label="X Location" value="-61.243" />
              <Row label="Y Location" value="-150.362" />
              <Row label="Z Location" value="39.984" />
              <Row label="Location"><PlaceButton /></Row>
              <Section title="Target" />
              <Row label="X Target" value="-50.237" />
              <Row label="Y Target" value="-97.217" />
              <Row label="Z Target" value="2.264" />
              <Row label="Location"><PlaceButton /></Row>
              <Section title="Wallpaper" />
              <Row label="Filename" value="(none)">
                <div className="ml-auto w-[20px] h-[20px] bg-[#dcdde0] border border-[#c2c4c8] flex items-end justify-center text-[12px] leading-[16px] text-[#444]">...</div>
              </Row>
              <Row label="Show"><div className="ml-[4px]"><Check size={18} /></div></Row>
              <Row label="Gray"><div className="ml-[4px]"><Check size={18} /></div></Row>
            </div>
          </div>
        </div>
      </div>
      {/* filter rows */}
      <div className="h-[33px] shrink-0 flex items-center pl-[9px] pt-[1px] border-b border-[#cfd2d8]">
        {filters.map(([label, width]) => (
          <CheckItem key={label} label={label} width={width} />
        ))}
        <OffItem label="Disable" width={70} gap="gap-[2px]" />
      </div>
      <div className="h-[30px] shrink-0 flex items-center pl-[9px]">
        {snaps.map(([label, width]) => (
          <CheckItem key={label} label={label} width={width} />
        ))}
        <OffItem label="Project" width={71} gap="gap-[4px]" />
        <OffItem label="Disable" width={70} gap="gap-[3px]" />
      </div>
      {/* status bar */}
      <div className="h-[22px] shrink-0 flex border-t border-[#aeb2ba] text-[14px] text-[#222] leading-[22px]">
        {[["CPlane", 67], ["x -27.306", 88], ["y -104.048", 88], ["z 18.719", 88], ["-32.3874", 89]].map(([t, w]) => (
          <div key={t} className="border-r border-[#aeb2ba] text-center shrink-0" style={{ width: w }}>{t}</div>
        ))}
        <div className="w-[172px] shrink-0 flex items-center pl-[3px] border-r border-[#aeb2ba]">
          <div className="w-[15px] h-[16px] bg-[#22ee77] border border-[#6b8f7a] mr-[2px]" />
          surface
        </div>
        {[["Grid Snap", 91, 0], ["Ortho", 58.5, 0], ["Planar", 63.5, 0], ["Osnap", 64, 1], ["SmartTrack", 105, 1], ["Gumball", 77, 1], ["Record History", 131, 0], ["Filter", 53, 0]].map(([t, w, on]) => (
          <div key={t} className={`border-r border-[#aeb2ba] text-center shrink-0 ${on ? "font-bold bg-[#e6f0fa] text-[#111]" : ""}`} style={{ width: w as number }}>{t}</div>
        ))}
        <div className="w-[677px] pl-[4px] shrink-0 border-r border-[#aeb2ba]">Minutes from last save: 8</div>
      </div>
      {/* taskbar */}
      <div className="h-[50px] shrink-0 bg-black flex items-center text-white relative font-['Roboto',sans-serif]">
        <div className="w-[60px] flex justify-center shrink-0">
          <svg width="20" height="20" viewBox="0 0 20 20"><path d="M0 3 L9 1.6 V9.4 H0 Z M10 1.4 L20 0 V9.4 H10 Z M0 10.5 H9 V18.4 L0 17 Z M10 10.5 H20 V20 L10 18.6 Z" fill="#fff" /></svg>
        </div>
        <div className="w-[59px] flex justify-center shrink-0">
          <svg width="20" height="20" viewBox="0 0 20 20"><circle cx="10" cy="10" r="8" fill="none" stroke="#fff" strokeWidth="2.4" /></svg>
        </div>
        <div className="w-[63px] flex justify-center shrink-0">
          <svg width="26" height="20" viewBox="0 0 26 20"><rect x="6" y="1" width="14" height="18" fill="none" stroke="#fff" strokeWidth="1.4" /><path d="M3 4 H1 V16 H3 M23 4 H25 V16 H23" fill="none" stroke="#fff" /></svg>
        </div>
        <Running>
          <svg width="30" height="32" viewBox="0 0 30 32">
            <circle cx="15" cy="16" r="14" fill="#e8661c" /><circle cx="16" cy="15" r="8" fill="#2e4fa5" />
            <path d="M2 16 C3 8 8 3 15 2 C11 5 10 8 11 10 C7 11 6 15 8 19 C11 25 20 25 24 20 C22 28 14 32 8 27 C4 24 2 20 2 16 Z" fill="#f29a1e" />
          </svg>
        </Running>
        <Running>
          <svg width="28" height="30" viewBox="0 0 28 30"><path d="M1 3 H12 L14 6 H27 V28 H1 Z" fill="#f3cf63" /><rect x="1" y="12" width="26" height="14" fill="#f8dc84" /><path d="M7 28 V20 H21 V28 H17 V24 H11 V28 Z" fill="#3d9bd6" /></svg>
        </Running>
        <Running>
          <svg width="30" height="32" viewBox="0 0 30 32">
            <ellipse cx="15" cy="16" rx="15" ry="16" fill="#48b07a" />
            <g fill="none" stroke="#e8f6ee" strokeWidth="1">
              <ellipse cx="15" cy="16" rx="10" ry="4" transform="rotate(30 15 16)" />
              <ellipse cx="15" cy="16" rx="10" ry="4" transform="rotate(90 15 16)" />
              <ellipse cx="15" cy="16" rx="10" ry="4" transform="rotate(150 15 16)" />
            </g>
            <circle cx="15" cy="16" r="1.6" fill="#fff" />
          </svg>
        </Running>
        <Running active>
          <svg width="30" height="30" viewBox="0 0 30 30"><rect width="30" height="30" fill="#222" /><path d="M2 6 L11 1 L14 8 L27 14 L26 26 L15 28 L9 14 Z" fill="#c8c8c8" /><path d="M12 14 L20 15 L16 21 Z" fill="#7d3a3a" /></svg>
        </Running>
        <Running>
          <div className="w-[27px] h-[34px] bg-[#0b1f4a] border-2 border-[#3f8fd0] flex items-center justify-center text-[#7cc0f0] text-[16px] font-bold">Ps</div>
        </Running>
        <div className="ml-auto flex items-center h-full">
          <svg width="16" height="10" viewBox="0 0 16 10" className="mr-[12px]"><path d="M1 9 L8 2 L15 9" fill="none" stroke="#fff" strokeWidth="1.2" /></svg>
          <svg width="22" height="20" viewBox="0 0 22 20" className="mr-[9px]">
            <path d="M1 3 L5 0 L9 3 L5 6 Z M10 3 L14 0 L18 3 L14 6 Z M1 9 L5 6 L9 9 L5 12 Z M10 9 L14 6 L18 9 L14 12 Z M5 14 L9 11 L13 14 L9 17 Z" fill="#fff" />
            <circle cx="15" cy="14" r="5.5" fill="#45a86a" /><path d="M12.5 14 L14.5 16 L18 12" fill="none" stroke="#fff" strokeWidth="1.2" />
          </svg>
          <svg width="20" height="12" viewBox="0 0 20 12" className="mr-[11px]"><rect x=".5" y=".5" width="17" height="11" fill="none" stroke="#fff" /><rect x="2" y="2" width="11" height="8" fill="#fff" /><rect x="18" y="4" width="2" height="4" fill="#fff" /></svg>
          <svg width="18" height="16" viewBox="0 0 18 16" className="mr-[9px]"><path d="M1 15 A14 14 0 0 1 15 1 M4.5 15 A10 10 0 0 1 15 4.5 M8 15 A7 7 0 0 1 15 8" fill="none" stroke="#ccc" /><circle cx="14" cy="14" r="1.4" fill="#fff" /></svg>
          <svg width="20" height="14" viewBox="0 0 20 14" className="mr-[12px]"><path d="M1 4.5 H4 L8 1 V13 L4 9.5 H1 Z" fill="none" stroke="#fff" /><path d="M12 4 L19 11 M19 4 L12 11" stroke="#fff" /></svg>
          <div className="w-[76px] text-center text-[14.5px] leading-[23px] text-[#eee] mr-[24px] whitespace-nowrap">
            <div>10:29</div>
            <div>21/09/2017</div>
          </div>
          <svg width="20" height="19" viewBox="0 0 20 19" className="mr-[31px]"><path d="M.5 .5 H19.5 V15.5 H12 L10 18 L8 15.5 H.5 Z" fill="none" stroke="#fff" /></svg>
        </div>
        <div className="absolute right-[6px] top-0 h-full w-px bg-[#333]" />
      </div>
    </div>
  );
}
